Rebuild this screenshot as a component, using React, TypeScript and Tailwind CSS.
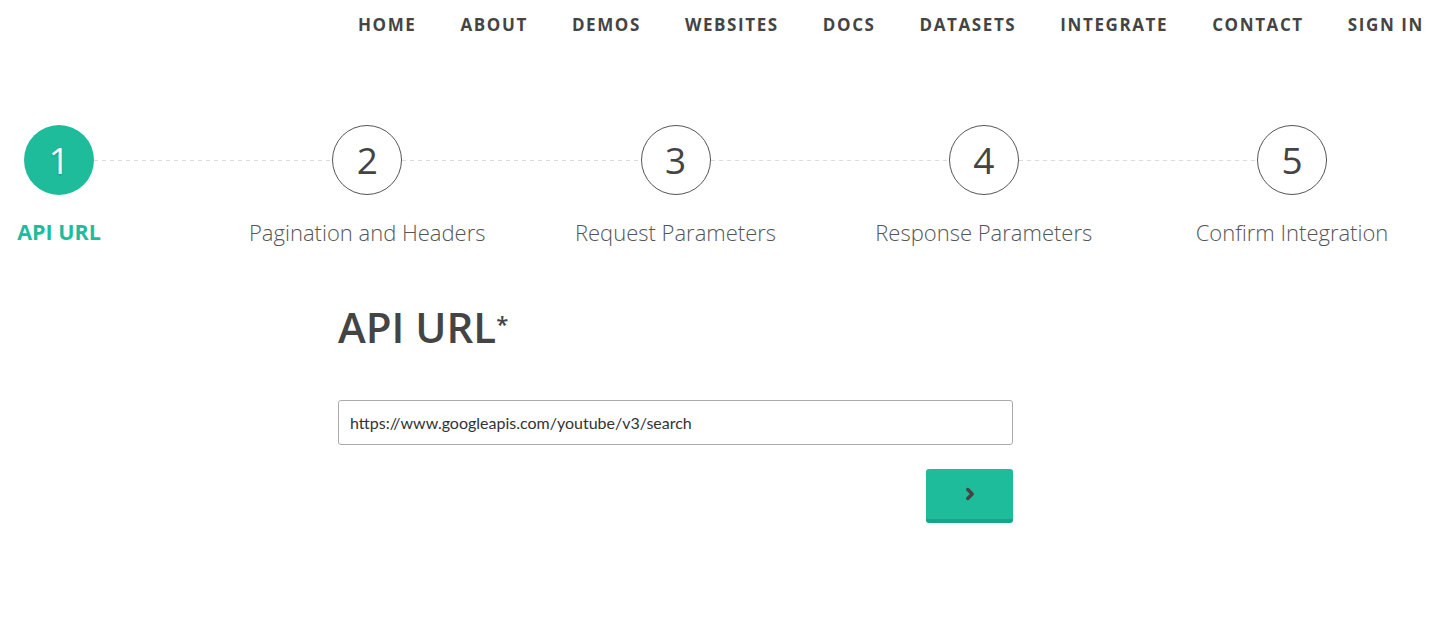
import { ChevronRight } from "lucide-react";

const navItems = [
  "Home",
  "About",
  "Demos",
  "Websites",
  "Docs",
  "Datasets",
  "Integrate",
  "Contact",
  "Sign in",
];

const steps = [
  "API URL",
  "Pagination and Headers",
  "Request Parameters",
  "Response Parameters",
  "Confirm Integration",
];

function StepCircle({ n, active }: { n: number; active: boolean }) {
  return (
    <div
      className={
        active
          ? "flex size-[70px] shrink-0 items-center justify-center rounded-full bg-[#1fbc9c] text-[37px] font-normal text-white [text-shadow:0_1px_2px_rgba(0,0,0,0.25)]"
          : "flex size-[70px] shrink-0 items-center justify-center rounded-full border border-[#555] text-[37px] font-normal text-[#444]"
      }
    >
      {n}
    </div>
  );
}

export default function App() {
  return (
    <div className="min-h-screen w-full bg-white font-['Open_Sans',sans-serif] text-[#444]">
      {/* top nav */}
      <nav className="flex h-[48px] items-center justify-end gap-[44px] pt-[2px] pr-[14px]">
        {navItems.map((item) => (
          <a
            key={item}
            href="#"
            className="text-[17px] font-bold uppercase tracking-[1.6px] text-[#444]"
          >
            {item}
          </a>
        ))}
      </nav>

      {/* stepper */}
      <div className="mt-[77px] ml-[24px] flex w-[1303px] items-center">
        {steps.map((_, i) => (
          <div key={i} className="contents">
            <StepCircle n={i + 1} active={i === 0} />
            {i < steps.length - 1 && (
              <div className="h-px flex-1 bg-[repeating-linear-gradient(to_right,#dcdcdc_0,#dcdcdc_4px,transparent_4px,transparent_8px)]" />
            )}
          </div>
        ))}
      </div>
      <div className="mt-[22px] ml-[24px] flex h-[30px] w-[1303px]">
        {steps.map((label, i) => (
          <div key={label} className="contents">
            <div className="flex w-[70px] shrink-0 items-center justify-center">
              <span
                className={
                  i === 0
                    ? "whitespace-nowrap text-[21.5px] font-bold text-[#1fbc9c]"
                    : "whitespace-nowrap text-[22px] font-light text-[#555]"
                }
              >
                {label}
              </span>
            </div>
            {i < steps.length - 1 && <div className="flex-1" />}
          </div>
        ))}
      </div>

      {/* form */}
      <div className="mt-[55px] ml-[338px] flex w-[675px] flex-col">
        <h1 className="text-[42px] font-semibold leading-[1.2] text-[#444]">
          API URL<sup className="text-[22px]">*</sup>
        </h1>
        <input
          type="text"
          defaultValue="https://www.googleapis.com/youtube/v3/search"
          className="mt-[48px] h-[45px] w-full rounded-[3px] border border-[#aaa] px-[11px] font-['Lato',sans-serif] text-[16px] text-[#333] outline-none"
        />
        <div className="mt-[24px] flex justify-end">
          <button
            type="button"
            className="flex h-[54px] w-[87px] items-center justify-center rounded-[3px] border-b-[4px] border-[#17a589] bg-[#1fbc9c] text-[#444]"
          >
            <ChevronRight size={18} strokeWidth={4.5} />
          </button>
        </div>
      </div>
    </div>
  );
}
